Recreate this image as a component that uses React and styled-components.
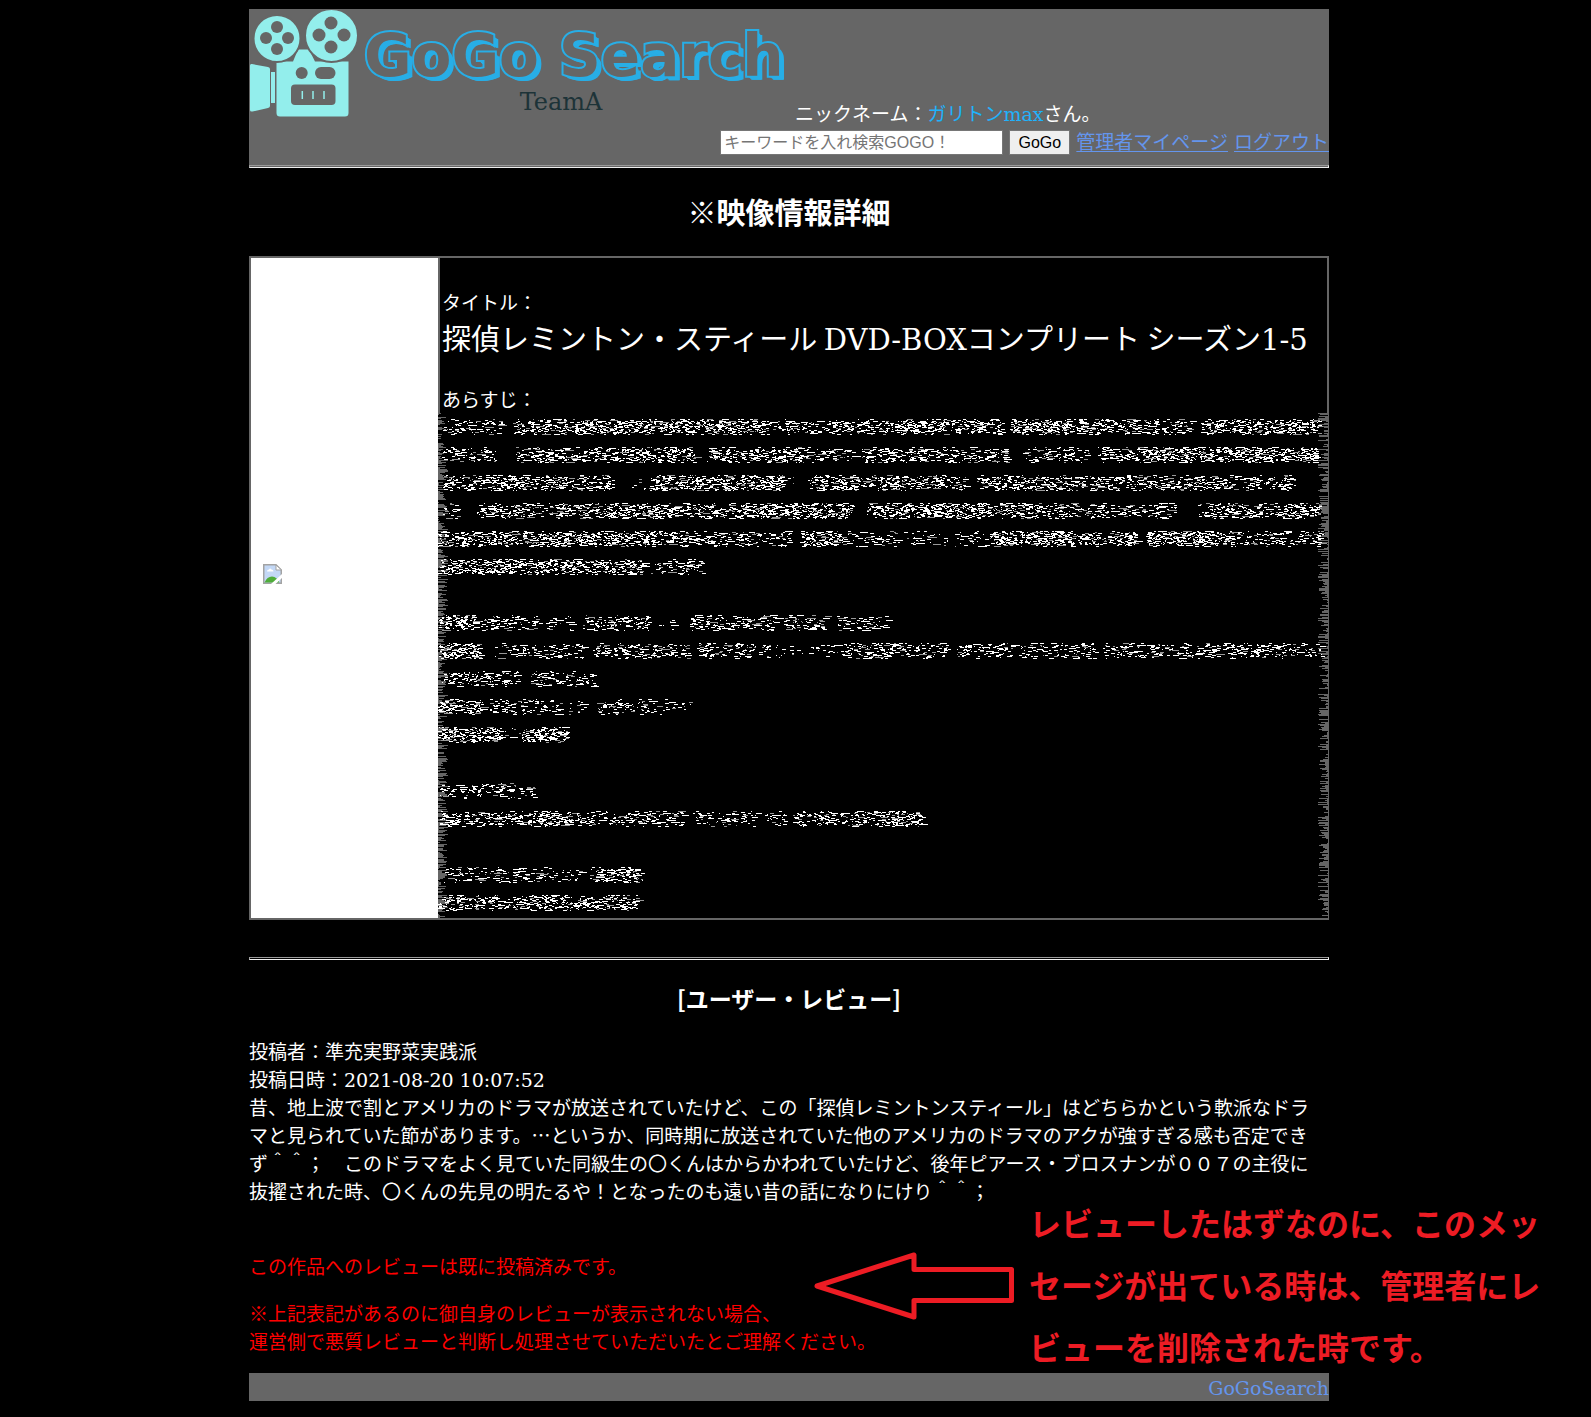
import React from "react";
import styled, { createGlobalStyle } from "styled-components";

const GRAY = "#666666";
const LINK = "#6495ed";
const MARK = "#ed1c24";

const GlobalStyle = createGlobalStyle`
  * { box-sizing: border-box; }
  body {
    margin: 0;
    background: #000;
    color: #fff;
    font-family: "Noto Sans CJK JP", sans-serif;
    font-size: 19px;
    line-height: 28px;
  }
  p, h1, h2, h3 { margin: 0; }
`;

const Page = styled.div`
  padding: 9px 13px 15px 0;
  overflow-x: hidden;
`;
const Wrapper = styled.div`
  max-width: 1080px;
  margin: 0 auto;
`;

/* Latin letters and digits are set in a slab face */
const Latin = styled.span`
  font-family: "DejaVu Serif", serif;
  line-height: 1;
`;

const Header = styled.header`
  background: ${GRAY};
`;
const Brand = styled.div`
  display: flex;
  align-items: flex-end;
  height: 118px;
`;
const Logo = styled.div`
  display: flex;
  align-self: flex-start;
  width: 546px;
`;
const LogoText = styled.div`
  flex: 1;
  padding-top: 16px;
`;
const LogoName = styled.div`
  padding-left: 7px;
  font: bold 58px/62px "DejaVu Sans", sans-serif;
  white-space: nowrap;
  color: ${GRAY};
  -webkit-text-stroke: 4px #28aee6;
  paint-order: stroke fill;
  stroke-linejoin: round;
  text-shadow: 1px 1px 0 #28aee6, 2px 2px 0 #28aee6, 3px 3px 0 #28aee6,
    4px 4px 0 #28aee6, 5px 4px 0 #28aee6;
`;
const LogoTeam = styled.div`
  padding-right: 30px;
  font: 24px/30px "DejaVu Serif", serif;
  text-align: center;
  color: #1d3338;
`;
const Accent = styled.span`
  color: #1fb2fc;
`;
const Tools = styled.form`
  display: flex;
  justify-content: flex-end;
  align-items: flex-end;
  gap: 6px;
  height: 28px;
`;
const SearchBox = styled.input`
  width: 283px;
  height: 25px;
  padding: 0 3px;
  border: 1px solid #767676;
  border-radius: 0;
  background: #fff;
  font: 16px "Liberation Sans", "Noto Sans CJK JP", sans-serif;
  &::placeholder { color: #757575; opacity: 1; }
`;
const SearchButton = styled.button`
  width: 61px;
  height: 25px;
  padding: 0;
  border: 1px solid #767676;
  border-radius: 0;
  background: #efefef;
  color: #000;
  font: 16px "Liberation Sans", sans-serif;
`;
const NavLink = styled.a`
  color: ${LINK};
  height: 28px;
  white-space: nowrap;
  text-decoration: ${(p) => (p.$plain ? "none" : "underline")};
  text-underline-offset: 2px;
  text-decoration-thickness: 1px;
`;
const Rule = styled.hr`
  height: 3px;
  margin: ${(p) => p.$space || 0}px 0 0;
  border: 1px solid;
  border-color: #9a9a9a #eeeeee #eeeeee #9a9a9a;
`;

const Caption = styled.h1`
  margin: 22px 0 24px;
  font-size: 29px;
  line-height: 42px;
  text-align: center;
`;
const Frame = styled.section`
  display: grid;
  grid-template-columns: 187px 1fr;
  border: 2px solid ${GRAY};
  border-right: 0;
`;
const Cover = styled.div`
  display: flex;
  align-items: center;
  padding: 0 0 28px 12px;
  background: #fff;
`;
const Facts = styled.div`
  padding: 30px 0 0 2px;
  border: 0 solid ${GRAY};
  border-width: 0 2px;
`;
const WorkTitle = styled.p`
  margin-bottom: 27px;
  font-size: 29px;
  line-height: 42px;
`;
const Synopsis = styled.div`
  border-right: 1px solid ${GRAY};
  svg { display: block; width: 100%; height: 505px; }
`;

const ReviewTitle = styled.h2`
  margin: 22px 0 23px;
  font-size: 23px;
  line-height: 32px;
  text-align: center;
`;
const ReviewBody = styled.p`
  padding-right: 12px;
`;
const Notice = styled.div`
  position: relative;
  display: grid;
  gap: 19px;
  padding: 47px 0 18px;
  color: #f00;
`;
const Arrow = styled.svg`
  position: absolute;
  left: 565px;
  top: 47px;
`;
const Annotation = styled.p`
  position: absolute;
  left: 780px;
  top: -14px;
  width: 520px;
  font-size: 32px;
  line-height: 62px;
  font-weight: bold;
  color: ${MARK};
`;
const Footer = styled.footer`
  background: ${GRAY};
  text-align: right;
`;

/* Scrambled synopsis: each line lists [start, end, density] runs in pixels */
const LINES = [
  [[2, 64, 0.35], [75, 142, 0.6], [142, 325, 1], [325, 458, 0.6], [458, 510, 1], [512, 565, 0.6], [572, 635, 1], [635, 755, 0.7], [763, 882, 0.9]],
  [[2, 62, 0.45], [78, 188, 0.6], [188, 258, 1], [268, 325, 0.6], [325, 362, 1], [362, 415, 0.4], [422, 572, 0.55], [585, 652, 0.35], [660, 702, 0.6], [702, 880, 0.9]],
  [[4, 175, 0.6], [190, 212, 0.1], [212, 345, 0.9], [345, 360, 0.2], [370, 528, 0.75], [538, 798, 0.8], [802, 857, 0.5]],
  [[4, 20, 0.4], [38, 100, 0.5], [100, 115, 0.15], [115, 225, 0.85], [225, 312, 0.6], [312, 415, 0.95], [428, 602, 0.9], [602, 662, 0.6], [662, 738, 0.45], [760, 882, 0.65]],
  [[0, 252, 0.85], [252, 352, 0.45], [362, 408, 1], [408, 548, 0.25], [552, 635, 1], [635, 698, 0.7], [707, 795, 1], [795, 885, 0.5]],
  [[0, 205, 0.9], [212, 265, 0.4]],
  [],
  [[0, 38, 1], [42, 102, 0.4], [108, 138, 0.25], [145, 212, 0.5], [217, 245, 0.12], [252, 338, 0.6], [345, 388, 0.6], [398, 450, 0.35]],
  [[0, 42, 1], [55, 145, 0.45], [155, 252, 0.55], [258, 332, 0.5], [334, 400, 0.2], [402, 512, 0.55], [518, 575, 0.45], [580, 660, 0.4], [664, 780, 0.45], [784, 884, 0.5]],
  [[4, 82, 0.5], [92, 157, 0.5]],
  [[0, 45, 1], [52, 122, 0.4], [122, 150, 0.15], [158, 212, 0.5], [212, 255, 0.15]],
  [[0, 64, 1], [66, 82, 0.2], [84, 129, 1]],
  [],
  [[2, 98, 0.45]],
  [[2, 88, 0.6], [88, 136, 1], [136, 245, 0.5], [252, 348, 0.35], [355, 435, 0.5], [435, 485, 0.95]],
  [],
  [[4, 142, 0.45], [152, 205, 0.8]],
  [[0, 62, 0.9], [66, 72, 0.3], [74, 199, 0.8]],
];

function makeRandom(seed) {
  let s = seed;
  return () => {
    s = (s * 1664525 + 1013904223) % 4294967296;
    return s / 4294967296;
  };
}

/* Ink gathers in glyph-sized clumps, so neighbouring cells differ in weight */
function buildInk() {
  const rnd = makeRandom(7);
  let bright = "";
  let dim = "";
  LINES.forEach((runs, row) => {
    runs.forEach(([from, to, density]) => {
      const cells = Array.from(
        { length: (Math.ceil((to - from) / 6) + 1) * 6 },
        () => 0.35 + rnd() * 1.3
      );
      for (let y = 0; y < 16; y++) {
        const edge = y < 2 || y > 13 ? 0.45 : 1;
        let x = from + rnd() * 5;
        while (x < to) {
          const cell = cells[Math.floor((x - from) / 6) * 6 + Math.floor(y / 3)];
          if (rnd() < density * edge * cell * 0.62) {
            const len = rnd() < 0.2 ? 4 + Math.floor(rnd() * 6) : 1 + Math.floor(rnd() * 4);
            const d = `M${Math.floor(x)} ${row * 28 + 6 + y}h${len}v1h-${len}z`;
            if (rnd() < 0.8) bright += d;
            else dim += d;
            x += len;
          }
          x += 1 + Math.floor(rnd() * 4);
        }
      }
    });
  });
  return { bright, dim };
}

function buildEdge(seed, direction) {
  const rnd = makeRandom(seed);
  let d = "";
  for (let y = 0; y < 505; y++) {
    const r = rnd();
    if (r < 0.7) {
      const len = 1 + Math.floor(rnd() * 10);
      d += `M0 ${y}h${direction * len}v1h${-direction * len}z`;
    }
  }
  return d;
}

const INK = buildInk();
const LEFT_EDGE = buildEdge(11, 1);
const RIGHT_EDGE = buildEdge(29, -1);

function ScrambledSynopsis() {
  return (
    <Synopsis>
      <svg aria-hidden="true" shapeRendering="crispEdges">
        <path d={LEFT_EDGE} fill={GRAY} />
        <path d={INK.dim} fill="#999" />
        <path d={INK.bright} fill="#fff" />
        <svg x="100%" overflow="visible">
          <path d={RIGHT_EDGE} fill={GRAY} />
        </svg>
      </svg>
    </Synopsis>
  );
}

const REEL_HOLES = [
  [28, 18, 6], [17, 29, 6], [39, 29, 6], [28, 40, 6],
  [82, 14, 6.5], [70, 26, 6.5], [95, 26, 6.5], [82, 38, 6.5],
];

function CameraIcon() {
  return (
    <svg width="108" height="108" viewBox="0 0 108 108" aria-hidden="true">
      <g fill="#93eeec">
        <path d="M27.5 52.500L44 52.500L49 40.500H60L66 52.500H99.500V104Q99.500 107.500 96 107.500H31Q27.500 107.500 27.500 104Z" />
        <path d="M1 56.500Q1 54.500 3 55L19 58Q21 58.500 21 60V97Q21 98.500 19 99L3.500 102.500Q1 103 1 101Z" />
        <rect x="22" y="63" width="4" height="31" />
      </g>
      <g fill="#93eeec" stroke={GRAY} strokeWidth="2">
        <circle cx="28" cy="29.500" r="23.500" />
        <circle cx="82.500" cy="26.500" r="26.500" />
      </g>
      <g fill={GRAY}>
        {REEL_HOLES.map(([cx, cy, r]) => (
          <circle key={`${cx}-${cy}`} cx={cx} cy={cy} r={r} />
        ))}
        <circle cx="52.700" cy="64" r="6" />
        <rect x="66" y="58" width="20.500" height="12" rx="6" />
        <rect x="42" y="75.500" width="44.500" height="20.500" rx="4" />
      </g>
      <path d="M53.300 82V90M64 82V90M75 82V90" stroke="#93eeec" strokeWidth="1.500" />
    </svg>
  );
}

function BrokenImage() {
  return (
    <svg width="19" height="20" viewBox="0 0 19 20" role="img" aria-label="cover">
      <path d="M.75.75H13L18.250 6V19.250H.75Z" fill="#c3d8f6" stroke="#a3a3a3" strokeWidth="1.500" />
      <path d="M13 1V6H18.500Z" fill="#fff" stroke="#a3a3a3" />
      <path d="M4 7.500Q4 5.500 6 5.500Q7 3.500 8.500 5.500Q10.500 5.500 10.500 7.500Z" fill="#fff" />
      <path d="M1.500 18.500Q4 12.500 9 12.500Q14 13 16.500 18.500Z" fill="#4fad3a" />
      <path d="M8 20L19 10V14L12.500 20Z" fill="#fff" />
    </svg>
  );
}

export default function App() {
  return (
    <Page>
      <GlobalStyle />
      <Wrapper>
        <Header>
          <Brand>
            <Logo>
              <CameraIcon />
              <LogoText>
                <LogoName>GoGo Search</LogoName>
                <LogoTeam>TeamA</LogoTeam>
              </LogoText>
            </Logo>
            <p>
              ニックネーム：
              <Accent>ガリトン<Latin>max</Latin></Accent>
              さん。
            </p>
          </Brand>
          <Tools onSubmit={(e) => e.preventDefault()}>
            <SearchBox type="text" aria-label="キーワード" placeholder="キーワードを入れ検索GOGO！" />
            <SearchButton type="submit">GoGo</SearchButton>
            <NavLink href="#mypage">管理者マイページ</NavLink>
            <NavLink href="#logout">ログアウト</NavLink>
          </Tools>
          <Rule $space={10} />
        </Header>

        <main>
          <Caption>※映像情報詳細</Caption>
          <Frame>
            <Cover>
              <BrokenImage />
            </Cover>
            <div>
              <Facts>
                <p>タイトル：</p>
                <WorkTitle>
                  探偵レミントン・スティール <Latin>DVD-BOX</Latin>コンプリート シーズン<Latin>1-5</Latin>
                </WorkTitle>
                <p>あらすじ：</p>
              </Facts>
              <ScrambledSynopsis />
            </div>
          </Frame>

          <Rule $space={37} />
          <ReviewTitle>[ユーザー・レビュー]</ReviewTitle>
          <p>投稿者：準充実野菜実践派</p>
          <p>投稿日時：<Latin>2021-08-20 10:07:52</Latin></p>
          <ReviewBody>
            昔、地上波で割とアメリカのドラマが放送されていたけど、この「探偵レミントンスティール」はどちらかという軟派なドラマと見られていた節があります。…というか、同時期に放送されていた他のアメリカのドラマのアクが強すぎる感も否定できず＾＾；　このドラマをよく見ていた同級生の〇くんはからかわれていたけど、後年ピアース・ブロスナンが００７の主役に抜擢された時、〇くんの先見の明たるや！となったのも遠い昔の話になりにけり＾＾；
          </ReviewBody>
          <Notice>
            <p>この作品へのレビューは既に投稿済みです。</p>
            <p>
              ※上記表記があるのに御自身のレビューが表示されない場合、
              <br />
              運営側で悪質レビューと判断し処理させていただいたとご理解ください。
            </p>
            <Arrow width="202" height="68" viewBox="0 0 202 68" aria-hidden="true">
              <path
                d="M3 34L100 3V17.500H197.500V48.500H100V65Z"
                fill="none"
                stroke={MARK}
                strokeWidth="5"
                strokeLinejoin="round"
              />
            </Arrow>
            <Annotation>
              レビューしたはずなのに、このメッセージが出ている時は、管理者にレビューを削除された時です。
            </Annotation>
          </Notice>
        </main>

        <Footer>
          <NavLink $plain href="#top"><Latin>GoGoSearch</Latin></NavLink>
        </Footer>
      </Wrapper>
    </Page>
  );
}
